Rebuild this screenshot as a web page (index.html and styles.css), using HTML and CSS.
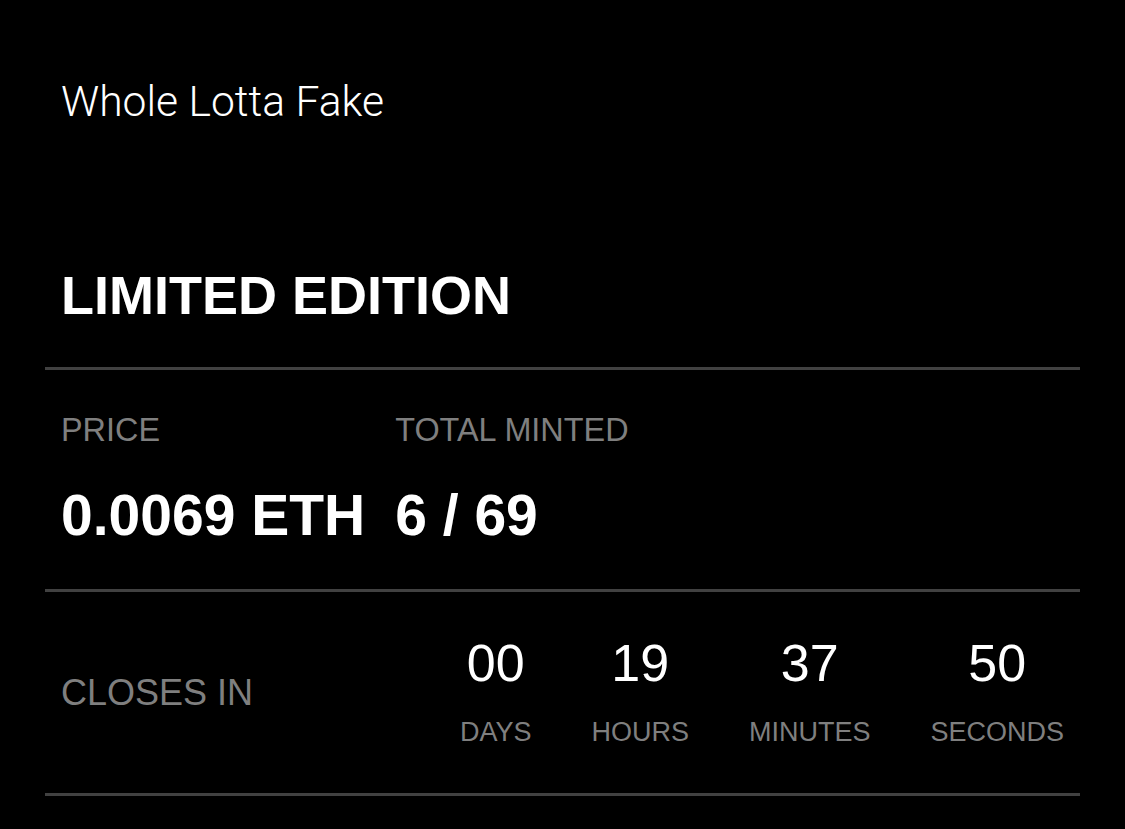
FILE: index.html
```html
<!DOCTYPE html>
<html lang="en">
<head>
    <meta charset="UTF-8">
    <meta name="viewport" content="width=device-width, initial-scale=1.0">
    <title>Whole Lotta Fake</title>
    <link rel="stylesheet" href="styles.css">
</head>
<body>
    <div class="container">
        <div class="header">
            <h1 class="title">Whole Lotta Fake</h1>
            <h2 class="edition">LIMITED EDITION</h2>
        </div>
        <div class="stats">
            <div class="stat">
                <p class="label">PRICE</p>
                <p class="value">0.0069 ETH</p>
            </div>
            <div class="stat">
                <p class="label">TOTAL MINTED</p>
                <p class="value">6 / 69</p>
            </div>
        </div>
        <div class="countdown">
            <p class="closes">CLOSES IN</p>
            <div class="timer">
                <div class="unit">
                    <span class="num">00</span>
                    <span class="unit-label">DAYS</span>
                </div>
                <div class="unit">
                    <span class="num">19</span>
                    <span class="unit-label">HOURS</span>
                </div>
                <div class="unit">
                    <span class="num">37</span>
                    <span class="unit-label">MINUTES</span>
                </div>
                <div class="unit">
                    <span class="num">50</span>
                    <span class="unit-label">SECONDS</span>
                </div>
            </div>
        </div>
    </div>
</body>
</html>
```

FILE: styles.css
```css
* {
    margin: 0;
    padding: 0;
    box-sizing: border-box;
    font-family: "Liberation Sans", Arial, sans-serif;
}
body {
    background-color: #000;
    color: #fff;
    line-height: 1.15;
}
.container {
    padding: 0 45px;
}
.header {
    padding: 77px 16px 41px;
}
.title {
    font-family: Roboto, "Liberation Sans", sans-serif;
    font-size: 42.6px;
    font-weight: 300;
    margin-bottom: 138px;
}
.edition {
    font-size: 54px;
    font-weight: bold;
}
.stats {
    display: flex;
    gap: 30px;
    padding: 42px 16px 40px;
    border-top: 3px solid #414141;
}
.label {
    font-size: 32.4px;
    color: #7f7f7f;
    margin-bottom: 34px;
}
.value {
    font-size: 57px;
    font-weight: bold;
}
.countdown {
    display: flex;
    justify-content: space-between;
    align-items: center;
    padding: 42px 16px 45px;
    border-top: 3px solid #414141;
    border-bottom: 3px solid #414141;
}
.closes {
    font-size: 36px;
    color: #7f7f7f;
    padding-top: 4px;
}
.timer {
    display: flex;
    gap: 60px;
}
.unit {
    display: flex;
    flex-direction: column;
    align-items: center;
}
.num {
    font-size: 52px;
    margin-bottom: 23px;
}
.unit-label {
    font-size: 27px;
    color: #7f7f7f;
}
```
